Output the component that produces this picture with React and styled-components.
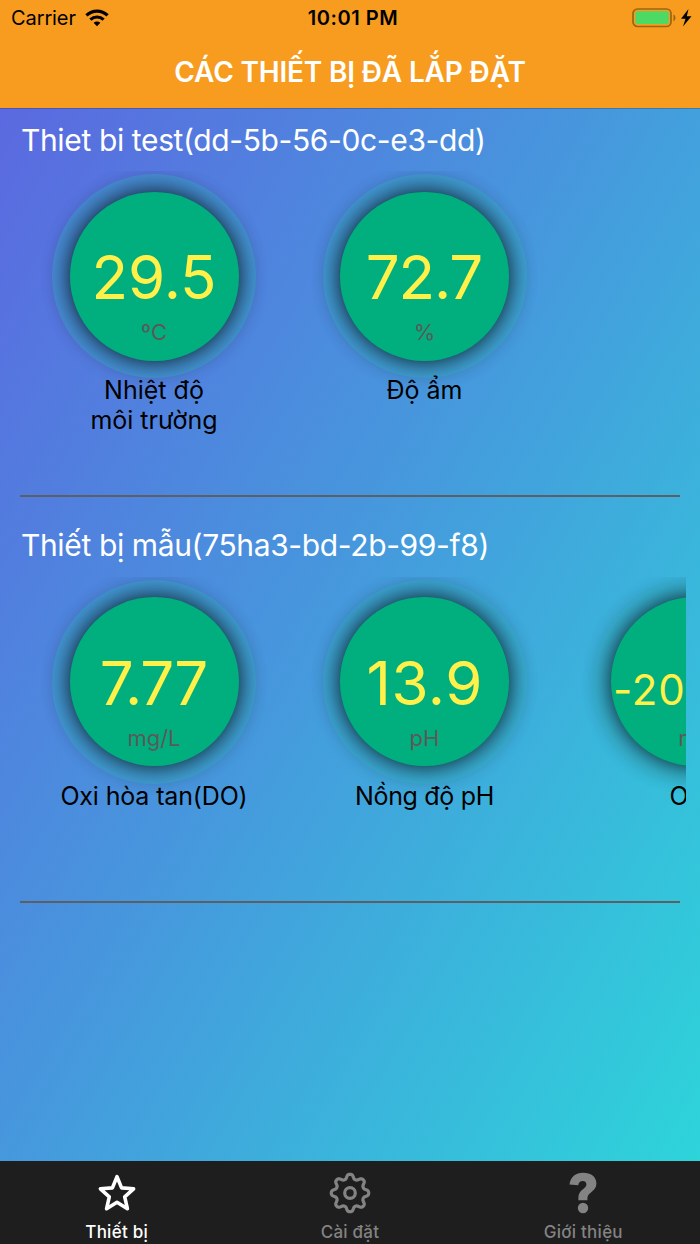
import React from 'react'
import styled, { createGlobalStyle } from 'styled-components'

const GlobalStyle = createGlobalStyle`
  * {
    box-sizing: border-box;
  }

  body {
    margin: 0;
    font-family: Inter, "Noto Sans", sans-serif;
  }
`

const Screen = styled.div`
  display: flex;
  flex-direction: column;
  width: 700px;
  height: 1244px;
  overflow: hidden;
`

const Header = styled.header`
  height: 108px;
  background: #f79c1e;
`

const StatusBar = styled.div`
  display: grid;
  grid-template-columns: 1fr auto 1fr;
  align-items: center;
  height: 36px;
  padding: 0 8px 0 11px;
  font-size: 20px;
  color: #000;
`

const Carrier = styled.div`
  display: flex;
  align-items: center;
  gap: 9px;
  letter-spacing: -0.1px;
`

const Clock = styled.div`
  padding-left: 3px;
  font-weight: 600;
  letter-spacing: 0.55px;
`

const Battery = styled.div`
  display: flex;
  justify-content: flex-end;
`

const Title = styled.h1`
  margin: 0;
  height: 72px;
  line-height: 72px;
  text-align: center;
  font-size: 28px;
  font-weight: 600;
  letter-spacing: -0.17px;
  color: #fff;
`

const Content = styled.main`
  flex: 1;
  padding: 0 14px;
  background: linear-gradient(120deg, #5b69e0 0%, #4796dd 45%, #2dd4da 100%);
  box-shadow: inset 0 1px 0 rgba(0, 0, 0, 0.2);
`

const Device = styled.section`
  height: 405.5px;
`

const DeviceName = styled.h2`
  margin: 0;
  height: 63px;
  padding-left: 7px;
  line-height: 64px;
  font-size: 30px;
  font-weight: 400;
  letter-spacing: -0.37px;
  color: #fff;

  ${Device} + ${Device} & {
    line-height: 63px;
  }
`

const Sensors = styled.div`
  display: flex;
  gap: 66.5px;
  height: 316px;
  padding: 3px 0 0 38px;
  overflow: hidden;
`

const Sensor = styled.div`
  flex: none;
  width: 204px;
  display: flex;
  flex-direction: column;
  align-items: center;
`

const Halo = styled.div`
  width: 204px;
  height: 204px;
  padding: 17.5px;
  border-radius: 50%;
  background: rgba(52, 177, 200, 0.4);
  box-shadow: 0 0 16px rgba(0, 0, 0, 0.06);
`

const Dial = styled.div`
  display: flex;
  flex-direction: column;
  align-items: center;
  height: 169px;
  padding-top: 49.5px;
  border-radius: 50%;
  background: #00af7d;
  box-shadow: 0 0 24px rgba(0, 0, 0, 0.9);
`

const Value = styled.div`
  height: 72px;
  line-height: ${({ $size }) => ($size ? 85 : 73)}px;
  font-size: ${({ $size }) => $size || 60}px;
  letter-spacing: ${({ $track }) => $track || 0}px;
  text-indent: ${({ $track }) => $track || 0}px;
  color: #fff04a;
  white-space: nowrap;
`

const Unit = styled.div`
  height: 38px;
  line-height: 39px;
  font-size: 22px;
  color: #5a5a5a;
`

const Label = styled.div`
  margin-top: -3px;
  line-height: 30px;
  font-size: 25px;
  letter-spacing: ${({ $track }) => $track || 0}px;
  text-align: center;
  white-space: pre-line;
  color: #000;
`

const Divider = styled.hr`
  height: 2px;
  margin: 8px 6px 0;
  border: 0;
  background: #5c6064;
`

const TabBar = styled.nav`
  display: grid;
  grid-template-columns: repeat(3, 1fr);
  height: 83px;
  background: #1e1e1e;
`

const Tab = styled.div`
  display: flex;
  flex-direction: column;
  align-items: center;
  padding-top: 11px;
  font-size: 17px;
  font-weight: 500;
  letter-spacing: 0.25px;
  line-height: 22px;
  color: ${({ $active }) => ($active ? '#fff' : '#838383')};

  svg {
    margin-bottom: 7px;
  }
`

const devices = [
  {
    name: 'Thiet bi test(dd-5b-56-0c-e3-dd)',
    sensors: [
      { value: '29.5', unit: 'ºC', label: 'Nhiệt độ\nmôi trường' },
      { value: '72.7', unit: '%', label: 'Độ ẩm', track: -1.2 },
    ],
  },
  {
    name: 'Thiết bị mẫu(75ha3-bd-2b-99-f8)',
    sensors: [
      { value: '7.77', unit: 'mg/L', label: 'Oxi hòa tan(DO)', track: -1.2, labelTrack: -0.15 },
      { value: '13.9', unit: 'pH', label: 'Nồng độ pH', track: 0.6, labelTrack: -0.3 },
      { value: '-200.25', unit: 'mV', label: 'ORP', size: 42, track: 0.9 },
    ],
  },
]

const WifiIcon = () => (
  <svg width="24" height="18" viewBox="0 0 24 18" fill="none" stroke="#000" strokeWidth="3.2">
    <path d="M1.4 6.3C7.4.6 16.6.6 22.6 6.3" />
    <path d="M5.4 10.6c3.8-3.500 9.400-3.500 13.200 0" />
    <path d="M8.600 13.800c2-1.800 4.800-1.800 6.800 0L12 17.200z" fill="#000" stroke="none" />
  </svg>
)

const BatteryIcon = () => (
  <svg width="60" height="20" viewBox="0 0 60 20">
    <rect x="1" y="1" width="38" height="17.5" rx="4.5" fill="none" stroke="#9c6414" strokeWidth="1.7" />
    <rect x="3.3" y="3.3" width="33.5" height="12.7" rx="2" fill="#4cd964" />
    <path d="M41.500 6.500c2.600 1 2.600 5.700 0 6.700z" fill="#9c6414" />
    <path d="M56.500 1L49 10.800h4.500L51 18.500l8.500-10.300h-4.700z" fill="#000" />
  </svg>
)

const StarIcon = () => (
  <svg width="42" height="42" viewBox="0 0 42 42" fill="none" stroke="currentColor" strokeWidth="3.6" strokeLinejoin="round">
    <path d="M21 4.700l4.600 11.200 12 .9-8.900 8 2.700 11.900L21 30.300l-10.400 6.400 2.700-11.900-8.900-8 12-.9z" />
  </svg>
)

// eight-lobed outline, radius swings between valley and tooth
const gearPath = (() => {
  const pts = []
  for (let i = 0; i <= 144; i++) {
    const a = (i / 144) * Math.PI * 2
    const r = 16.5 + 2.5 * Math.tanh(1.4 * Math.cos(8 * a))
    pts.push(`${(21 + r * Math.cos(a)).toFixed(2)} ${(21 + r * Math.sin(a)).toFixed(2)}`)
  }
  return `M${pts.join('L')}Z`
})()

const GearIcon = () => (
  <svg width="42" height="42" viewBox="0 0 42 42" fill="none" stroke="currentColor" strokeWidth="3.2" strokeLinejoin="round">
    <path d={gearPath} />
    <circle cx="21" cy="21" r="5.3" />
  </svg>
)

const QuestionIcon = () => (
  <svg width="42" height="42" viewBox="0 0 42 42" fill="currentColor">
    <path d="M7.500 12.500C8.500 5 13.500.8 21 .8c7.800 0 13.400 4 13.400 10.700 0 8-8.600 8.600-9 14.500v2.200h-9v-3.100c0-7.600 8-8.200 8-12.700 0-2.200-1.600-3.400-3.800-3.400-2.600 0-4 1.600-4.400 4.300z" />
    <circle cx="21" cy="36" r="5.2" />
  </svg>
)

const App = () => {
  return (
    <>
      <GlobalStyle />
      <Screen>
        <Header>
          <StatusBar>
            <Carrier>
              Carrier
              <WifiIcon />
            </Carrier>
            <Clock>10:01 PM</Clock>
            <Battery>
              <BatteryIcon />
            </Battery>
          </StatusBar>
          <Title>CÁC THIẾT BỊ ĐÃ LẮP ĐẶT</Title>
        </Header>
        <Content>
          {devices.map((device) => (
            <Device key={device.name}>
              <DeviceName>{device.name}</DeviceName>
              <Sensors>
                {device.sensors.map((sensor) => (
                  <Sensor key={sensor.label}>
                    <Halo>
                      <Dial>
                        <Value $size={sensor.size} $track={sensor.track}>{sensor.value}</Value>
                        <Unit>{sensor.unit}</Unit>
                      </Dial>
                    </Halo>
                    <Label $track={sensor.labelTrack}>{sensor.label}</Label>
                  </Sensor>
                ))}
              </Sensors>
              <Divider />
            </Device>
          ))}
        </Content>
        <TabBar>
          <Tab $active>
            <StarIcon />
            Thiết bị
          </Tab>
          <Tab>
            <GearIcon />
            Cài đặt
          </Tab>
          <Tab>
            <QuestionIcon />
            Giới thiệu
          </Tab>
        </TabBar>
      </Screen>
    </>
  )
}

export default App
